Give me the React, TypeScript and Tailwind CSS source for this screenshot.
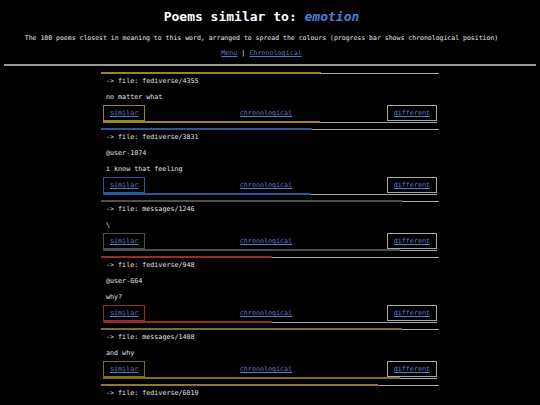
import React from 'react';

type Poem = { file: string; lines: string[]; color: string; pct: number };

const poems: Poem[] = [
  { file: 'fediverse/4355', lines: ['no matter what'], color: '#9a8528', pct: 65 },
  { file: 'fediverse/3831', lines: ['@user-1074', 'i know that feeling'], color: '#2d5598', pct: 62.4 },
  { file: 'messages/1246', lines: ['\\'], color: '#4f4f4f', pct: 89 },
  { file: 'fediverse/948', lines: ['@user-664', 'why?'], color: '#982a2a', pct: 50.6 },
  { file: 'messages/1408', lines: ['and why'], color: '#7d6d26', pct: 89 },
  { file: 'fediverse/6019', lines: [], color: '#8c7a2a', pct: 82 },
];

/** progress bar: thin grey track with a thicker coloured fill */
function Bar({ color, pct }: { color: string; pct: number }) {
  return (
    <div className="relative h-[2px]">
      <div className="absolute inset-x-0 bottom-0 h-px bg-[#a8a8a8]" />
      <div className="absolute inset-y-0 left-0" style={{ width: `${pct}%`, backgroundColor: color }} />
    </div>
  );
}

function PoemBlock({ p, last }: { p: Poem; last?: boolean }) {
  return (
    <div className="mb-[5px]">
      <Bar color={p.color} pct={p.pct} />
      <div className="-mt-px px-[5px] text-[6.7px] leading-4 text-[#e6e6e6]">
        <div>-&gt; file: {p.file}</div>
        {p.lines.map((l, i) => (
          <div key={i}>{l}</div>
        ))}
      </div>
      {!last && (
        <div className="mx-[2px]">
          <div className="flex h-4 items-stretch text-[6.7px]">
            <div className="flex items-center border px-[6px]" style={{ borderColor: p.color }}>
              <a href="#" className="text-[#5f7dc2] underline">similar</a>
            </div>
            <div className="flex flex-1 items-center justify-center">
              <a href="#" className="text-[#5f7dc2] underline">chronological</a>
            </div>
            <div className="flex items-center border border-[#a8a8a8] px-[6px]">
              <a href="#" className="text-[#5f7dc2] underline">different</a>
            </div>
          </div>
          <Bar color={p.color} pct={p.pct} />
        </div>
      )}
    </div>
  );
}

export default function App() {
  return (
    <div className="h-[405px] overflow-hidden bg-black pt-[9px] text-white" style={{ fontFamily: '"DejaVu Sans Mono", monospace' }}>
      <header className="pr-[17px] text-center">
        <h1 className="text-[13px] font-bold leading-4">
          Poems similar to: <em className="text-[#4a7fd6]">emotion</em>
        </h1>
        <p className="mt-2 text-[6.5px] leading-[10px] text-[#e8e8e8]">
          The 100 poems closest in meaning to this word, arranged to spread the colours (progress bar shows chronological position)
        </p>
        <div className="mt-[5px] text-[6.7px] leading-[10px]">
          <a href="#" className="text-[#5a76ba] underline">Menu</a>
          <span className="mx-[4px] text-[#e0e0e0]">|</span>
          <a href="#" className="text-[#5a76ba] underline">Chronological</a>
        </div>
      </header>
      <div className="mx-[4px] mt-[6px] h-[2px] bg-[#999]" />
      <main className="mx-auto mt-[6px] w-[338px]">
        {poems.map((p, i) => (
          <PoemBlock key={p.file} p={p} last={i === poems.length - 1} />
        ))}
      </main>
    </div>
  );
}
